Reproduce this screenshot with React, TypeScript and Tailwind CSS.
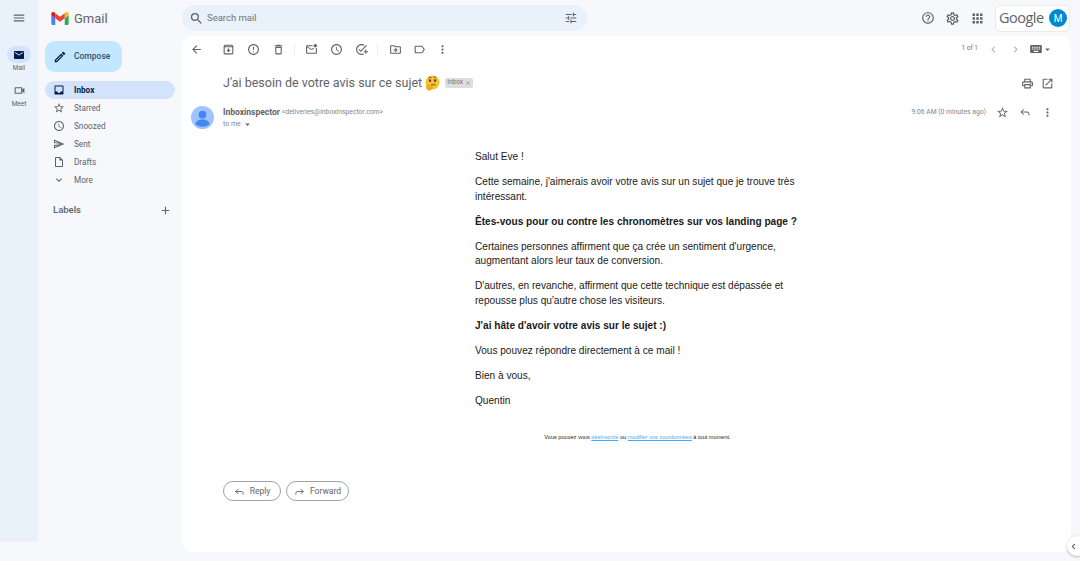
import React from 'react';
import {
  MdMenu, MdEmail, MdOutlineVideocam, MdOutlineEdit, MdInbox, MdStarBorder, MdAccessTime, MdOutlineSend,
  MdOutlineInsertDriveFile, MdExpandMore, MdAdd, MdSearch, MdTune, MdHelpOutline, MdOutlineSettings, MdApps,
  MdArrowBack, MdOutlineArchive, MdErrorOutline, MdOutlineDelete, MdOutlineMarkEmailUnread, MdOutlineAddTask,
  MdOutlineDriveFileMove, MdOutlineLabel, MdMoreVert, MdChevronLeft, MdChevronRight, MdKeyboard,
  MdArrowDropDown, MdOutlinePrint, MdOpenInNew, MdClose,
} from 'react-icons/md';
import { Reply, Forward } from 'lucide-react';

const roboto = { fontFamily: 'Roboto, sans-serif' };

const navItems = [
  { label: 'Inbox', icon: MdInbox, active: true },
  { label: 'Starred', icon: MdStarBorder },
  { label: 'Snoozed', icon: MdAccessTime },
  { label: 'Sent', icon: MdOutlineSend },
  { label: 'Drafts', icon: MdOutlineInsertDriveFile },
  { label: 'More', icon: MdExpandMore },
];

const GmailLogo = () => (
  <svg width="18" height="13" viewBox="52 42 88 66">
    <path fill="#4285f4" d="M58 108h14V74L52 59v43c0 3.32 2.69 6 6 6" />
    <path fill="#34a853" d="M120 108h14c3.32 0 6-2.69 6-6V59l-20 15" />
    <path fill="#fbbc04" d="M120 48v26l20-15v-8c0-7.42-8.47-11.65-14.4-7.2" />
    <path fill="#ea4335" d="M72 74V48l24 18 24-18v26L96 92" />
    <path fill="#c5221f" d="M52 51v8l20 15V48l-5.6-4.2c-5.94-4.45-14.4-.22-14.4 7.2" />
  </svg>
);

const ThinkingEmoji = () => (
  <svg width="15" height="16" viewBox="0 0 30 32" className="ml-[3px] shrink-0">
    <circle cx="15" cy="15" r="14" fill="#fbc02d" />
    <ellipse cx="10" cy="11" rx="2.2" ry="3" fill="#5d4037" />
    <ellipse cx="20" cy="11" rx="2.2" ry="3" fill="#5d4037" />
    <path d="M7 6q3-2.5 6-1M17 4q4-1 6 2" stroke="#5d4037" strokeWidth="1.6" fill="none" />
    <path d="M12 20q5-2.5 9 0" stroke="#5d4037" strokeWidth="1.8" fill="none" />
    <path d="M3 22q5-2 9-1l3-1q3 0 1 3l-3 2q1 5-5 6-6-2-5-9" fill="#f9a825" stroke="#ef8f00" strokeWidth="1" />
  </svg>
);

const ToolButton = ({ icon: Icon, size = 13, className = '' }: { icon: React.ElementType; size?: number; className?: string }) => (
  <button className={`w-[25px] h-[26px] flex items-center justify-center text-[#5f6368] shrink-0 ${className}`}>
    <Icon size={size} />
  </button>
);

const Divider = () => <div className="w-px h-[13px] bg-[#eceef0] mx-[3px] shrink-0" />;

export default function App() {
  return (
    <div className="flex w-[1080px] h-[561px] overflow-hidden bg-[#f6f8fc] relative" style={roboto}>
      {/* app rail */}
      <div className="w-[38px] h-[542px] bg-[#e9f1fb] flex flex-col items-center shrink-0">
        <MdMenu size={14} className="text-[#5f6368] mt-[11px]" />
        <div className="w-[24px] h-[17px] mt-[21px] rounded-full bg-[#d3e3fd] flex items-center justify-center">
          <MdEmail size={12} className="text-[#041e49]" />
        </div>
        <span className="text-[6.5px] leading-[9px] mt-px text-[#5f6368]">Mail</span>
        <MdOutlineVideocam size={13} className="text-[#5f6368] mt-[11px]" />
        <span className="text-[6.5px] leading-[9px] mt-[2.5px] text-[#5f6368]">Meet</span>
      </div>

      {/* sidebar */}
      <div className="w-[144px] shrink-0 flex flex-col">
        <div className="h-[36px] flex items-center pl-[13px] pt-px">
          <GmailLogo />
          <span className="ml-[5px] text-[13px] text-[#5f6368]">Gmail</span>
        </div>
        <button className="ml-[7px] mt-[5px] w-[77px] h-[31px] rounded-[10px] bg-[#c2e7ff] flex items-center text-[8.5px] font-medium text-[#35506b]">
          <MdOutlineEdit size={14} className="ml-[8px] mr-[7px] text-[#001d35]" />
          Compose
        </button>
        <nav className="mt-[9px] flex flex-col">
          {navItems.map((item) => (
            <div
              key={item.label}
              className={`ml-[7px] w-[130px] h-[18px] rounded-full flex items-center text-[8.2px] ${
                item.active ? 'bg-[#d3e3fd] font-bold text-[#041e49]' : 'text-[#5f6368]'
              }`}
            >
              <item.icon size={12} className="ml-[8px] mr-[9px] shrink-0" />
              {item.label}
            </div>
          ))}
        </nav>
        <div className="mt-[12px] ml-[15px] mr-[10px] h-[18px] flex items-center justify-between text-[#5f6368]">
          <span className="text-[9.5px] font-medium">Labels</span>
          <MdAdd size={13} />
        </div>
      </div>

      {/* main */}
      <div className="flex-1 flex flex-col min-w-0">
        <header className="h-[36px] flex items-center shrink-0">
          <div className="w-[405px] h-[26px] rounded-full bg-[#e9f1fb] flex items-center text-[#5f6368]">
            <MdSearch size={15} className="ml-[7px]" />
            <span className="ml-[3px] text-[9.5px] text-[#70757a]">Search mail</span>
            <MdTune size={14} className="ml-auto mr-[9px]" />
          </div>
          <MdHelpOutline size={14} className="ml-[334px] text-[#5f6368]" />
          <MdOutlineSettings size={15} className="ml-[10px] text-[#5f6368]" />
          <MdApps size={15} className="ml-[10px] text-[#5f6368]" />
          <div className="ml-[10px] w-[75px] h-[27px] rounded-[5px] bg-white border border-[#e8eaed] flex items-center pl-[3px]">
            <span className="text-[14.5px] tracking-[-0.5px] text-[#5f6368]" style={{ fontFamily: '"Open Sans", sans-serif' }}>Google</span>
            <span className="ml-auto mr-[2px] w-[18px] h-[18px] rounded-full bg-[#0288d1] text-white text-[10px] flex items-center justify-center">M</span>
          </div>
        </header>

        <main className="w-[889px] h-[516px] bg-white rounded-[10px] flex flex-col">
          <div className="h-[26px] flex items-center shrink-0">
            <ToolButton icon={MdArrowBack} className="ml-[2px] mr-[7px]" />
            <ToolButton icon={MdOutlineArchive} />
            <ToolButton icon={MdErrorOutline} />
            <ToolButton icon={MdOutlineDelete} />
            <Divider />
            <ToolButton icon={MdOutlineMarkEmailUnread} className="ml-px" />
            <ToolButton icon={MdAccessTime} />
            <ToolButton icon={MdOutlineAddTask} />
            <Divider />
            <ToolButton icon={MdOutlineDriveFileMove} className="ml-[2px]" />
            <ToolButton icon={MdOutlineLabel} className="-ml-px" />
            <ToolButton icon={MdMoreVert} className="-ml-[2px]" />
            <span className="ml-auto text-[6.5px] text-[#70757a]">1 of 1</span>
            <MdChevronLeft size={13} className="ml-[9px] text-[#b4b7ba]" />
            <MdChevronRight size={13} className="ml-[9px] text-[#b4b7ba]" />
            <MdKeyboard size={14} className="ml-[7px] text-[#5f6368]" />
            <MdArrowDropDown size={11} className="-ml-px mr-[18px] text-[#5f6368]" />
          </div>

          <div className="flex items-center h-[20px] mt-[11px] pl-[41px] pr-[17px] shrink-0">
            <h1 className="text-[12.5px] text-[#5f6368] font-normal whitespace-nowrap">J&apos;ai besoin de votre avis sur ce sujet</h1>
            <ThinkingEmoji />
            <span className="ml-[5px] w-[28px] h-[10px] justify-center rounded-[2px] bg-[#dddddd] text-[6.5px] text-[#777777] flex items-center">
              Inbox
              <MdClose size={6} className="ml-[2px]" />
            </span>
            <MdOutlinePrint size={13} className="ml-auto text-[#5f6368]" />
            <MdOpenInNew size={13} className="ml-[7px] text-[#5f6368]" />
          </div>

          <div className="flex mt-[12px] pl-[9px] pr-[17px] shrink-0">
            <svg width="23" height="23" viewBox="0 0 24 24" className="shrink-0 mt-px">
              <circle cx="12" cy="12" r="12" fill="#a0c3ff" />
              <circle cx="12" cy="9" r="4" fill="#4285f4" />
              <path d="M4.5 19c1-3.6 4-5 7.5-5s6.5 1.4 7.5 5a12 12 0 0 1-15 0" fill="#4285f4" />
            </svg>
            <div className="ml-[9px] flex-1 mt-px">
              <div className="flex items-center h-[12px]">
                <span className="text-[8.5px] font-bold text-[#5f6368]">Inboxinspector</span>
                <span className="ml-[2px] text-[6.8px] text-[#80868b]">&lt;deliveries@inboxinspector.com&gt;</span>
                <span className="ml-auto text-[6.8px] text-[#80868b]">9:06 AM (0 minutes ago)</span>
                <MdStarBorder size={13} className="ml-[10px] text-[#5f6368]" />
                <Reply size={12} className="ml-[10px] text-[#5f6368]" />
                <MdMoreVert size={13} className="ml-[10px] text-[#5f6368]" />
              </div>
              <div className="flex items-center text-[7px] text-[#80868b] h-[10px] mt-px">
                to me
                <MdArrowDropDown size={11} className="ml-px text-[#5f6368]" />
              </div>
            </div>
          </div>

          <article
            className="ml-[293px] mt-[21px] w-[325px] text-[10.1px] leading-[14.5px] text-[#1a1a1a] flex flex-col gap-[10.6px]"
            style={{ fontFamily: '"Liberation Sans", Arial, sans-serif' }}
          >
            <p>Salut Eve !</p>
            <p>Cette semaine, j&apos;aimerais avoir votre avis sur un sujet que je trouve très intéressant.</p>
            <p className="font-bold">Êtes-vous pour ou contre les chronomètres sur vos landing page ?</p>
            <p>Certaines personnes affirment que ça crée un sentiment d&apos;urgence, augmentant alors leur taux de conversion.</p>
            <p>D&apos;autres, en revanche, affirment que cette technique est dépassée et repousse plus qu&apos;autre chose les visiteurs.</p>
            <p className="font-bold">J&apos;ai hâte d&apos;avoir votre avis sur le sujet :)</p>
            <p>Vous pouvez répondre directement à ce mail !</p>
            <p>Bien à vous,</p>
            <p>Quentin</p>
            <p className="mt-[14px] text-center text-[5.6px] leading-[8px] text-[#222222]">
              Vous pouvez vous <a className="text-[#4aa8f0] underline">désinscrire</a> ou <a className="text-[#4aa8f0] underline">modifier vos coordonnées</a> à tout moment.
            </p>
          </article>

          <div className="flex gap-[5px] ml-[41px] mt-[40px] text-[8.5px] text-[#5f6368]">
            <button className="w-[58px] h-[20px] rounded-full border border-[#a0a3a6] flex items-center justify-center gap-[5px]">
              <Reply size={11} />
              Reply
            </button>
            <button className="w-[63px] h-[20px] rounded-full border border-[#a0a3a6] flex items-center justify-center gap-[5px]">
              <Forward size={11} />
              Forward
            </button>
          </div>
        </main>
      </div>

      {/* side panel toggle */}
      <div className="absolute left-[1067px] top-[536px] w-[20px] h-[20px] rounded-full bg-white shadow-[0_1px_3px_rgba(60,64,67,0.35)] flex items-center pl-px">
        <MdChevronLeft size={11} className="text-[#444746]" />
      </div>
    </div>
  );
}
